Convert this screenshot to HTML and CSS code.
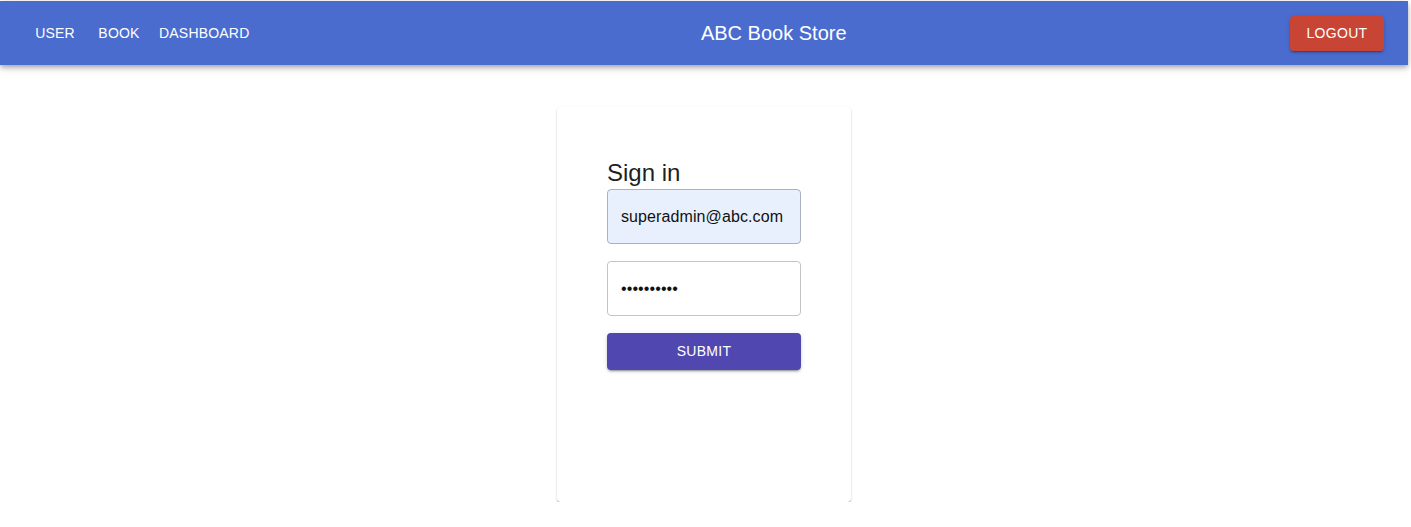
FILE: index.html
```html
<!DOCTYPE html>
<html>
<head>
<meta charset="utf-8">
<link rel="stylesheet" href="styles.css">
</head>
<body>
<div class="page">
  <header class="appbar">
    <nav class="nav">
      <button class="nav-btn">USER</button>
      <button class="nav-btn">BOOK</button>
      <button class="nav-btn">DASHBOARD</button>
    </nav>
    <div class="title">ABC Book Store</div>
    <button class="logout">LOGOUT</button>
  </header>
  <main class="main">
    <section class="card">
      <h1 class="heading">Sign in</h1>
      <div class="field field-filled">superadmin@abc.com</div>
      <div class="field">&#8226;&#8226;&#8226;&#8226;&#8226;&#8226;&#8226;&#8226;&#8226;&#8226;</div>
      <button class="submit">SUBMIT</button>
    </section>
  </main>
</div>
</body>
</html>
```
FILE: styles.css
```css
html, body {
  margin: 0;
  padding: 0;
  background: #ffffff;
}
body {
  font-family: "Liberation Sans", Arial, sans-serif;
  padding-top: 1px;
}
.page {
  width: 1408px;
}
.appbar {
  height: 64px;
  background: #4a6ccf;
  display: flex;
  align-items: center;
  justify-content: space-between;
  padding: 0 24px 0 23px;
  box-sizing: border-box;
  box-shadow: 0 2px 4px -1px rgba(0,0,0,0.2), 0 4px 5px 0 rgba(0,0,0,0.14), 0 1px 10px 0 rgba(0,0,0,0.12);
  position: relative;
  z-index: 1;
}
.nav {
  display: flex;
}
.nav-btn {
  background: transparent;
  border: none;
  color: #ffffff;
  font-family: inherit;
  font-size: 14px;
  font-weight: 500;
  padding: 6px 8px;
  min-width: 64px;
  line-height: 24px;
  letter-spacing: 0.2px;
}
.title {
  color: #ffffff;
  font-size: 20px;
  line-height: 32px;
}
.logout {
  background: #c84535;
  color: #ffffff;
  border: none;
  border-radius: 4px;
  font-family: inherit;
  font-size: 14px;
  padding: 0 16px;
  height: 35px;
  width: 94px;
  letter-spacing: 0.3px;
  box-shadow: 0 3px 1px -2px rgba(0,0,0,0.2), 0 2px 2px 0 rgba(0,0,0,0.14), 0 1px 5px 0 rgba(0,0,0,0.12);
}
.main {
  display: flex;
  justify-content: center;
  padding-top: 42px;
}
.card {
  width: 294px;
  height: 395px;
  box-sizing: border-box;
  padding: 50px 50px;
  background: #ffffff;
  border-radius: 4px;
  box-shadow: 0 2px 2px -1px rgba(0,0,0,0.3), 0 1px 1px 0 rgba(0,0,0,0.14), 0 1px 3px 0 rgba(0,0,0,0.12);
  display: flex;
  flex-direction: column;
}
.heading {
  margin: 0;
  font-size: 24px;
  font-weight: 400;
  line-height: 32px;
  color: #1f1f1f;
}
.field {
  height: 55px;
  box-sizing: border-box;
  border: 1px solid #c4c4c4;
  border-radius: 4px;
  padding: 0 13px;
  display: flex;
  align-items: center;
  font-size: 16px;
  color: #111111;
  margin-bottom: 17px;
  letter-spacing: 0.1px;
}
.field-filled {
  background: #e8f0fe;
  border-color: #a9b1c3;
}
.submit {
  height: 37px;
  padding: 0 0 1px;
  background: #5048b0;
  color: #ffffff;
  border: none;
  border-radius: 4px;
  font-family: inherit;
  font-size: 14px;
  letter-spacing: 0.3px;
  box-shadow: 0 3px 1px -2px rgba(0,0,0,0.2), 0 2px 2px 0 rgba(0,0,0,0.14), 0 1px 5px 0 rgba(0,0,0,0.12);
}
```
